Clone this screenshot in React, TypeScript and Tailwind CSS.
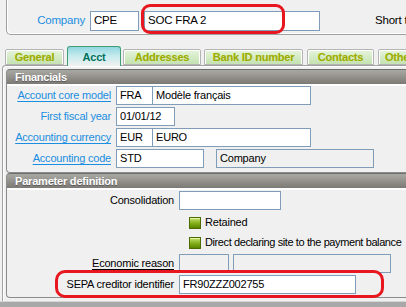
import React from "react";

function Box({ className = "", white = true, children }: { className?: string; white?: boolean; children?: React.ReactNode }) {
  return (
    <div
      className={`h-[19px] border border-[#7f9db9] flex items-center pl-[3px] shrink-0 whitespace-nowrap overflow-hidden ${white ? "bg-white" : "bg-[#f0f0f0]"} ${className}`}
    >
      {children}
    </div>
  );
}

function Tab({ className = "", children }: { className?: string; children: React.ReactNode }) {
  return (
    <div
      className={`h-[16px] shrink-0 border border-[#b4b4b4] rounded-t-[2px] shadow-[inset_1px_1px_0_#ffffff,inset_-1px_0_0_#ffffff] bg-gradient-to-b from-[#e6f4dc] to-[#c4e2b2] flex items-center justify-center font-bold text-[#9aab00] [text-shadow:0_0_1px_#d8e890] ${className}`}
    >
      {children}
    </div>
  );
}

function Check({ className = "", children }: { className?: string; children: React.ReactNode }) {
  return (
    <div className="h-[13px] flex items-center">
      <div className="ml-[182px] w-[12px] h-[12px] shrink-0 border border-[#4d6b00] bg-gradient-to-b from-[#c7e06a] via-[#86b21a] to-[#5a8600] shadow-[inset_0_1px_0_#e6f5a8]" />
      <span className={`ml-[4px] whitespace-nowrap ${className}`}>{children}</span>
    </div>
  );
}

function Header({ children }: { children: React.ReactNode }) {
  return (
    <div className="h-[17px] border-b-2 border-white">
      <div className="h-[15px] rounded-tl-[3px] border-t border-[#6e6e6c] bg-gradient-to-b from-[#a9a9a3] to-[#7d7975] flex items-center pl-[8px] text-white font-bold text-[11px] [text-shadow:0_1px_0_#5a5a5a]">
        {children}
      </div>
    </div>
  );
}

export default function App() {
  const link = "text-[#1a8ee0] underline underline-offset-[2px]";
  return (
    <div className="w-[406px] h-[307px] bg-[#f0f0f0] overflow-hidden relative font-['Liberation_Sans',Arial,sans-serif] text-[11px] tracking-[-0.2px] text-black leading-none">
      {/* top company section */}
      <div className="h-[35px] ml-[6px] w-[420px] border-l border-b border-[#a0a0a0] rounded-bl-[5px] shadow-[inset_1px_-1px_0_#ffffff] flex items-start pt-[11px]">
        <div className="w-[78px] h-[20px] flex items-center justify-end text-[#1a8ee0] text-[11.5px]">Company</div>
        <Box className="ml-[5px] w-[49px] h-[20px] text-[11.5px]">CPE</Box>
        <Box className="ml-[5px] w-[176px] h-[20px] text-[11.5px]">SOC FRA 2</Box>
        <div className="ml-[55px] h-[20px] flex items-center whitespace-nowrap text-[11.5px]">Short text</div>
      </div>

      {/* tabs */}
      <div className="flex items-end h-[30px] pl-[5px] relative z-10 w-[460px]">
        <Tab className="w-[59px]">General</Tab>
        <div className="ml-[3px] w-[54px] h-[20px] -mb-[1px] shrink-0 border border-b-0 border-[#3f9f74] rounded-t-[3px] bg-gradient-to-b from-[#92d6e0] via-[#c8ecee] to-[#f0f0f0] flex items-center justify-center font-bold text-[#00725c] pt-[1px]">
          Acct
        </div>
        <Tab className="ml-[2px] w-[78px]">Addresses</Tab>
        <Tab className="ml-[3px] w-[99px]">Bank ID number</Tab>
        <Tab className="ml-[4px] w-[67px]">Contacts</Tab>
        <Tab className="ml-[4px] w-[70px] justify-start pl-[6px]">Others</Tab>
      </div>

      {/* tab panel */}
      <div className="ml-[2px] w-[420px] h-[236px] border-l border-t border-[#a0a0a0] rounded-tl-[4px] shadow-[inset_1px_1px_0_#ffffff] pt-[3px] pl-[3px]">
        {/* Financials */}
        <div className="border-l border-b border-[#8c8c8c] rounded-tl-[4px] rounded-bl-[4px] pb-[4px]">
          <Header>Financials</Header>
          <div className="flex flex-col gap-[2px]">
            <div className="flex items-center">
              <div className="w-[104px] text-right"><span className={link}>Account core model</span></div>
              <Box className="ml-[5px] w-[37px]">FRA</Box>
              <Box className="-ml-[1px] w-[159px]">Modèle français</Box>
            </div>
            <div className="flex items-center">
              <div className="w-[104px] text-right text-[#1a8ee0]">First fiscal year</div>
              <Box className="ml-[5px] w-[59px]">01/01/12</Box>
            </div>
            <div className="flex items-center">
              <div className="w-[104px] text-right"><span className={link}>Accounting currency</span></div>
              <Box className="ml-[5px] w-[37px]">EUR</Box>
              <Box className="-ml-[1px] w-[159px]">EURO</Box>
            </div>
            <div className="flex items-center">
              <div className="w-[104px] text-right"><span className={link}>Accounting code</span></div>
              <Box className="ml-[5px] w-[88px]">STD</Box>
              <Box white={false} className="ml-[12px] w-[158px]">Company</Box>
            </div>
          </div>
        </div>

        {/* Parameter definition */}
        <div className="border-l border-b border-[#8c8c8c] rounded-tl-[4px] rounded-bl-[4px] pt-0 pb-[3px]">
          <Header>Parameter definition</Header>
          <div className="pt-[1px] flex flex-col">
            <div className="flex items-center">
              <div className="w-[167px] text-right">Consolidation</div>
              <Box className="ml-[5px] w-[102px]" />
            </div>
            <div className="mt-[6px]">
              <Check>Retained</Check>
            </div>
            <div className="mt-[7px]">
              <Check className="tracking-[-0.4px]">Direct declaring site to the payment balance</Check>
            </div>
            <div className="mt-[5px] flex items-center">
              <div className="w-[167px] text-right"><span className="underline underline-offset-[2px]">Economic reason</span></div>
              <Box white={false} className="ml-[5px] w-[50px]" />
              <Box white={false} className="ml-[4px] w-[158px]" />
            </div>
            <div className="mt-[2px] flex items-center">
              <div className="w-[167px] text-right">SEPA creditor identifier</div>
              <Box className="ml-[5px] w-[177px]">FR90ZZZ002755</Box>
            </div>
          </div>
        </div>
      </div>

      {/* bottom bar */}
      <div className="h-[6px] border-t border-[#d6d6d6] bg-[#a8a8a8]" />

      {/* red annotations */}
      <div className="absolute left-[141px] top-[4px] w-[144px] h-[30px] border-[3px] border-[#e8161f] rounded-[9px] z-20" />
      <div className="absolute left-[55px] top-[270px] w-[329px] h-[28px] border-[3px] border-[#e8161f] rounded-[10px] z-20" />
    </div>
  );
}
